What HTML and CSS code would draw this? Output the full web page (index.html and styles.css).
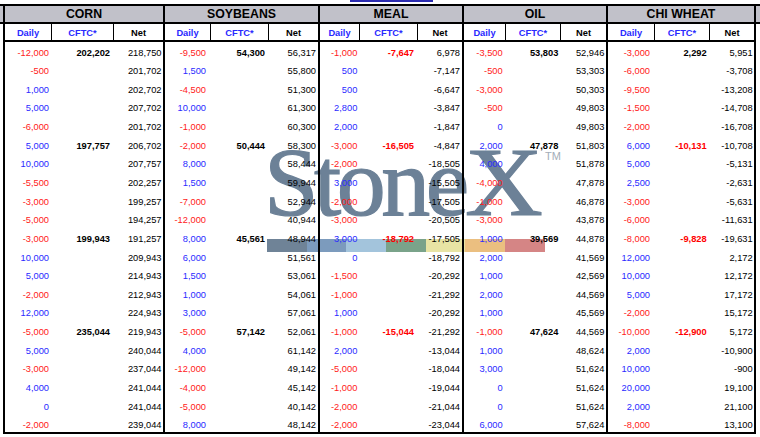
FILE: index.html
```html
<!DOCTYPE html>
<html>
<head>
<meta charset="utf-8">
<link rel="stylesheet" href="styles.css">
</head>
<body>
<div class="page">
  <div class="mark">
    <div class="logo">Stone<span class="x">X</span><span class="tm">TM</span></div>
    <div class="bar"><i class="s1"></i><i class="s2"></i><i class="s3"></i><i class="s4"></i><i class="s5"></i><i class="s6"></i><i class="s7"></i></div>
  </div>
  <div class="linkrow"><span class="link"></span></div>
  <div class="sheet">
    <div class="stub"><div class="stubhead"></div></div>
    <div class="table">
      <section class="grp corn">
        <div class="ttl">CORN</div>
        <div class="sub"><div class="d hb">Daily</div><div class="c hb">CFTC*</div><div class="n">Net</div></div>
        <div class="bd">
          <div class="d"><p class="r">-12,000</p><p class="r">-500</p><p class="b">1,000</p><p class="b">5,000</p><p class="r">-6,000</p><p class="b">5,000</p><p class="b">10,000</p><p class="r">-5,500</p><p class="r">-3,000</p><p class="r">-5,000</p><p class="r">-3,000</p><p class="b">10,000</p><p class="b">5,000</p><p class="r">-2,000</p><p class="b">12,000</p><p class="r">-5,000</p><p class="b">5,000</p><p class="r">-3,000</p><p class="b">4,000</p><p class="b">0</p><p class="r">-2,000</p></div>
          <div class="c"><p class="k">202,202</p><p></p><p></p><p></p><p></p><p class="k">197,757</p><p></p><p></p><p></p><p></p><p class="k">199,943</p><p></p><p></p><p></p><p></p><p class="k">235,044</p><p></p><p></p><p></p><p></p><p></p></div>
          <div class="n"><p>218,750</p><p>201,702</p><p>202,702</p><p>207,702</p><p>201,702</p><p>206,702</p><p>207,757</p><p>202,257</p><p>199,257</p><p>194,257</p><p>191,257</p><p>209,943</p><p>214,943</p><p>212,943</p><p>224,943</p><p>219,943</p><p>240,044</p><p>237,044</p><p>241,044</p><p>241,044</p><p>239,044</p></div>
        </div>
      </section>
      <section class="grp soy">
        <div class="ttl">SOYBEANS</div>
        <div class="sub"><div class="d hb">Daily</div><div class="c hb">CFTC*</div><div class="n">Net</div></div>
        <div class="bd">
          <div class="d"><p class="r">-9,500</p><p class="b">1,500</p><p class="r">-4,500</p><p class="b">10,000</p><p class="r">-1,000</p><p class="r">-2,000</p><p class="b">8,000</p><p class="b">1,500</p><p class="r">-7,000</p><p class="r">-12,000</p><p class="b">8,000</p><p class="b">6,000</p><p class="b">1,500</p><p class="b">1,000</p><p class="b">3,000</p><p class="r">-5,000</p><p class="b">4,000</p><p class="r">-12,000</p><p class="r">-4,000</p><p class="r">-5,000</p><p class="b">8,000</p></div>
          <div class="c"><p class="k">54,300</p><p></p><p></p><p></p><p></p><p class="k">50,444</p><p></p><p></p><p></p><p></p><p class="k">45,561</p><p></p><p></p><p></p><p></p><p class="k">57,142</p><p></p><p></p><p></p><p></p><p></p></div>
          <div class="n"><p>56,317</p><p>55,800</p><p>51,300</p><p>61,300</p><p>60,300</p><p>58,300</p><p>58,444</p><p>59,944</p><p>52,944</p><p>40,944</p><p>48,944</p><p>51,561</p><p>53,061</p><p>54,061</p><p>57,061</p><p>52,061</p><p>61,142</p><p>49,142</p><p>45,142</p><p>40,142</p><p>48,142</p></div>
        </div>
      </section>
      <section class="grp meal">
        <div class="ttl">MEAL</div>
        <div class="sub"><div class="d hb">Daily</div><div class="c hb">CFTC*</div><div class="n">Net</div></div>
        <div class="bd">
          <div class="d"><p class="r">-1,000</p><p class="b">500</p><p class="b">500</p><p class="b">2,800</p><p class="b">2,000</p><p class="r">-3,000</p><p class="r">-2,000</p><p class="b">3,000</p><p class="r">-2,000</p><p class="r">-3,000</p><p class="b">3,000</p><p class="b">0</p><p class="r">-1,500</p><p class="r">-1,000</p><p class="b">1,000</p><p class="r">-1,000</p><p class="b">2,000</p><p class="r">-5,000</p><p class="r">-1,000</p><p class="r">-2,000</p><p class="r">-2,000</p></div>
          <div class="c"><p class="kr">-7,647</p><p></p><p></p><p></p><p></p><p class="kr">-16,505</p><p></p><p></p><p></p><p></p><p class="kr">-18,792</p><p></p><p></p><p></p><p></p><p class="kr">-15,044</p><p></p><p></p><p></p><p></p><p></p></div>
          <div class="n"><p>6,978</p><p>-7,147</p><p>-6,647</p><p>-3,847</p><p>-1,847</p><p>-4,847</p><p>-18,505</p><p>-15,505</p><p>-17,505</p><p>-20,505</p><p>-17,505</p><p>-18,792</p><p>-20,292</p><p>-21,292</p><p>-20,292</p><p>-21,292</p><p>-13,044</p><p>-18,044</p><p>-19,044</p><p>-21,044</p><p>-23,044</p></div>
        </div>
      </section>
      <section class="grp oil">
        <div class="ttl">OIL</div>
        <div class="sub"><div class="d hb">Daily</div><div class="c hb">CFTC*</div><div class="n">Net</div></div>
        <div class="bd">
          <div class="d"><p class="r">-3,500</p><p class="r">-500</p><p class="r">-3,000</p><p class="r">-500</p><p class="b">0</p><p class="b">2,000</p><p class="b">4,000</p><p class="r">-4,000</p><p class="r">-1,000</p><p class="r">-3,000</p><p class="b">1,000</p><p class="b">2,000</p><p class="b">1,000</p><p class="b">2,000</p><p class="b">1,000</p><p class="r">-1,000</p><p class="b">1,000</p><p class="b">3,000</p><p class="b">0</p><p class="b">0</p><p class="b">6,000</p></div>
          <div class="c"><p class="k">53,803</p><p></p><p></p><p></p><p></p><p class="k">47,878</p><p></p><p></p><p></p><p></p><p class="k">39,569</p><p></p><p></p><p></p><p></p><p class="k">47,624</p><p></p><p></p><p></p><p></p><p></p></div>
          <div class="n"><p>52,946</p><p>53,303</p><p>50,303</p><p>49,803</p><p>49,803</p><p>51,803</p><p>51,878</p><p>47,878</p><p>46,878</p><p>43,878</p><p>44,878</p><p>41,569</p><p>42,569</p><p>44,569</p><p>45,569</p><p>44,569</p><p>48,624</p><p>51,624</p><p>51,624</p><p>51,624</p><p>57,624</p></div>
        </div>
      </section>
      <section class="grp wheat">
        <div class="ttl">CHI WHEAT</div>
        <div class="sub"><div class="d hb">Daily</div><div class="c hb">CFTC*</div><div class="n">Net</div></div>
        <div class="bd">
          <div class="d"><p class="r">-3,000</p><p class="r">-6,000</p><p class="r">-9,500</p><p class="r">-1,500</p><p class="r">-2,000</p><p class="b">6,000</p><p class="b">5,000</p><p class="b">2,500</p><p class="r">-3,000</p><p class="r">-6,000</p><p class="r">-8,000</p><p class="b">12,000</p><p class="b">10,000</p><p class="b">5,000</p><p class="r">-2,000</p><p class="r">-10,000</p><p class="b">2,000</p><p class="b">10,000</p><p class="b">20,000</p><p class="b">2,000</p><p class="r">-8,000</p></div>
          <div class="c"><p class="k">2,292</p><p></p><p></p><p></p><p></p><p class="kr">-10,131</p><p></p><p></p><p></p><p></p><p class="kr">-9,828</p><p></p><p></p><p></p><p></p><p class="kr">-12,900</p><p></p><p></p><p></p><p></p><p></p></div>
          <div class="n"><p>5,951</p><p>-3,708</p><p>-13,208</p><p>-14,708</p><p>-16,708</p><p>-10,708</p><p>-5,131</p><p>-2,631</p><p>-5,631</p><p>-11,631</p><p>-19,631</p><p>2,172</p><p>12,172</p><p>17,172</p><p>15,172</p><p>5,172</p><p>-10,900</p><p>-900</p><p>19,100</p><p>21,100</p><p>13,100</p></div>
        </div>
      </section>
    </div>
    <div class="stub stub-r"><div class="stubhead"></div></div>
  </div>
</div>
</body>
</html>
```
FILE: styles.css
```css
html, body {
  margin: 0;
  padding: 0;
  background: #fff;
}
body {
  font-family: "Liberation Sans", Arial, sans-serif;
  color: #111;
}
.page {
  position: relative;
  width: 760px;
  height: 437px;
  overflow: hidden;
  background: #fff;
}

/* watermark */
.mark {
  position: absolute;
  left: 0;
  top: 0;
  z-index: 0;
}
.logo {
  position: absolute;
  left: 264px;
  top: 133px;
  font-family: "Liberation Serif", "Times New Roman", serif;
  font-size: 98px;
  line-height: 1;
  color: #6c8197;
  -webkit-text-stroke: 1.2px #6c8197;
  letter-spacing: -4.5px;
  white-space: nowrap;
}
.logo .x {
  display: inline-block;
  transform: scaleX(1.1);
  transform-origin: left center;
}
.logo .tm {
  position: absolute;
  left: 281px;
  top: 18px;
  font-family: "Liberation Sans", Arial, sans-serif;
  font-size: 11px;
  line-height: 11px;
  letter-spacing: 0;
  color: #a3adb8;
  -webkit-text-stroke: 0;
}
.bar {
  position: absolute;
  left: 267px;
  top: 239px;
  display: flex;
  height: 13px;
}
.bar i {
  display: block;
  width: 39.7px;
  height: 13px;
}
.bar .s1 { background: #6f8397; }
.bar .s2 { background: #7c9bbd; }
.bar .s3 { background: #a3c4dc; }
.bar .s4 { background: #7aa38a; }
.bar .s5 { background: #e8e4a4; }
.bar .s6 { background: #ebbf80; }
.bar .s7 { background: #d58585; }

/* link underline at top */
.linkrow {
  position: relative;
  z-index: 1;
  height: 4px;
}
.link {
  display: block;
  margin-left: 350px;
  width: 83px;
  height: 2px;
  background: #2b2bb0;
}

/* sheet */
.sheet {
  position: relative;
  z-index: 1;
  display: flex;
  border-top: 2px solid #000;
}
.stub {
  width: 3px;
}
.stub-r {
  width: 4px;
}
.stubhead {
  height: 16px;
  background: #c1c1c9;
  border-bottom: 2px solid #000;
}
.table {
  display: flex;
  border-left: 2px solid #000;
  border-bottom: 2px solid #000;
}
.grp {
  display: flex;
  flex-direction: column;
  border-right: 2px solid #000;
}
.ttl {
  height: 16px;
  line-height: 16px;
  background: #c1c1c9;
  border-bottom: 2px solid #000;
  text-align: center;
  font-weight: bold;
  font-size: 12.3px;
  color: #000;
}
.sub {
  display: flex;
  height: 16px;
  border-bottom: 2px solid #000;
}
.sub > div {
  box-sizing: border-box;
  height: 16px;
  padding-top: 3px;
  line-height: 13px;
  text-align: center;
  font-weight: bold;
  font-size: 9.3px;
  color: #000;
}
.sub .d, .sub .c {
  border-right: 1px solid #000;
}
.sub .hb {
  color: #2a2aff;
}
.bd {
  display: flex;
  box-sizing: border-box;
  height: 390px;
  padding-top: 1.5px;
  overflow: hidden;
}
.bd > div {
  box-sizing: border-box;
  text-align: right;
  font-size: 9.3px;
}
.bd .d, .bd .c {
  border-right: 1px solid transparent;
}
.bd p {
  margin: 0;
  height: 18.65px;
  line-height: 18.65px;
  white-space: nowrap;
}
.bd .r { color: #ff1a1a; }
.bd .b { color: #2a2aff; }
.bd .k { font-weight: bold; color: #000; }
.bd .kr { font-weight: bold; color: #ff0000; }
.bd .n p { color: #000; }

/* column widths and right padding per group */
.corn .d { width: 47px; }
.corn .c { width: 62px; }
.corn .n { width: 49px; }
.corn .bd .d { padding-right: 2px; }
.corn .bd .c { padding-right: 3px; }
.corn .bd .n { padding-right: 1.5px; }

.soy .d { width: 46px; }
.soy .c { width: 58px; }
.soy .n { width: 49px; }
.soy .bd .d { padding-right: 4px; }
.soy .bd .c { padding-right: 3px; }
.soy .bd .n { padding-right: 2px; }

.meal .d { width: 40px; }
.meal .c { width: 58px; }
.meal .n { width: 44px; }
.meal .bd .d { padding-right: 1.7px; }
.meal .bd .c { padding-right: 3px; }
.meal .bd .n { padding-right: 2px; }

.oil .d { width: 42px; }
.oil .c { width: 55px; }
.oil .n { width: 45px; }
.oil .bd .d { padding-right: 2.3px; }
.oil .bd .c { padding-right: 1.7px; }
.oil .bd .n { padding-right: 1.7px; }

.wheat .d { width: 47px; }
.wheat .c { width: 55px; }
.wheat .n { width: 44px; }
.wheat .bd .d { padding-right: 4px; }
.wheat .bd .c { padding-right: 2.3px; }
.wheat .bd .n { padding-right: 1.3px; }
```
